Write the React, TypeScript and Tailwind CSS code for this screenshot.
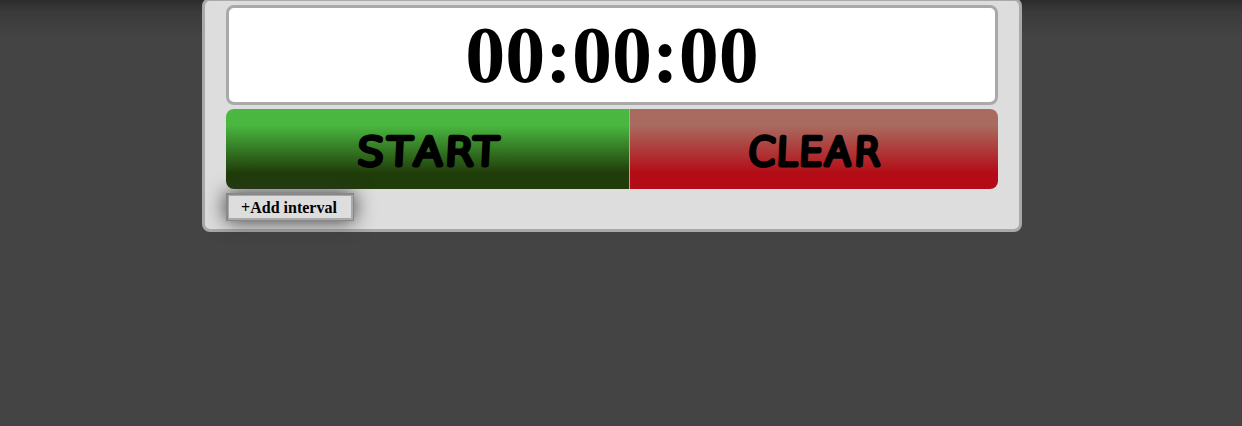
const lettering =
  "fill-black stroke-black stroke-[5px] font-['DejaVu_Sans',sans-serif] text-[38px] font-extralight [stroke-linejoin:round] [text-anchor:middle]";

export default function App() {
  return (
    <div className="flex h-[426px] items-start justify-center overflow-hidden bg-[#444444] bg-[linear-gradient(to_bottom,#2c2c2c_0px,#3a3a3a_12px,#444444_38px)]">
      <main className="-mt-[2px] -ml-[18px] h-[234px] w-[820px] rounded-[8px] border-[3px] border-[#a9a9a9] bg-[#dddddd] px-[21px] pt-1">
        <div className="flex h-[100px] items-center justify-center rounded-[8px] border-[3px] border-[#a9a9a9] bg-white font-['Liberation_Serif',serif] text-[80px] leading-none font-bold text-black">
          00:00:00
        </div>
        <div className="mt-1 flex h-20 overflow-hidden rounded-[8px]">
          <button className="flex w-[404px] items-center justify-center border-r border-[#a9a9a9] bg-[linear-gradient(to_bottom,#4ab840_20%,#203c0a_80%)]">
            <svg width="160" height="80" viewBox="0 0 160 80" aria-label="START">
              <text transform="translate(0 56) skewX(-3) scale(1.1 1)" x="20 46.2 72.5 101 124.5" y="0" className={lettering}>START</text>
            </svg>
          </button>
          <button className="flex flex-1 items-center justify-center bg-[linear-gradient(to_bottom,#a96b60_20%,#b40c16_80%)]">
            <svg width="160" height="80" viewBox="0 0 160 80" aria-label="CLEAR">
              <text transform="translate(0 56) skewX(-3)" x="27 52.5 76.5 103.5 133" y="0" className={lettering}>CLEAR</text>
            </svg>
          </button>
        </div>
        <button className="relative mt-1 block h-7 w-32 border-t-2 border-r border-b border-l-2 border-[#888888] bg-[#dddddd] pt-px pr-[3px] font-['Liberation_Serif',serif] text-[16px] leading-none font-bold whitespace-nowrap text-black shadow-[inset_1px_1px_0_#a9a9a9,inset_-2px_-2px_0_#a9a9a9,0_0_20px_#333333]">
          +Add interval
        </button>
      </main>
    </div>
  );
}
